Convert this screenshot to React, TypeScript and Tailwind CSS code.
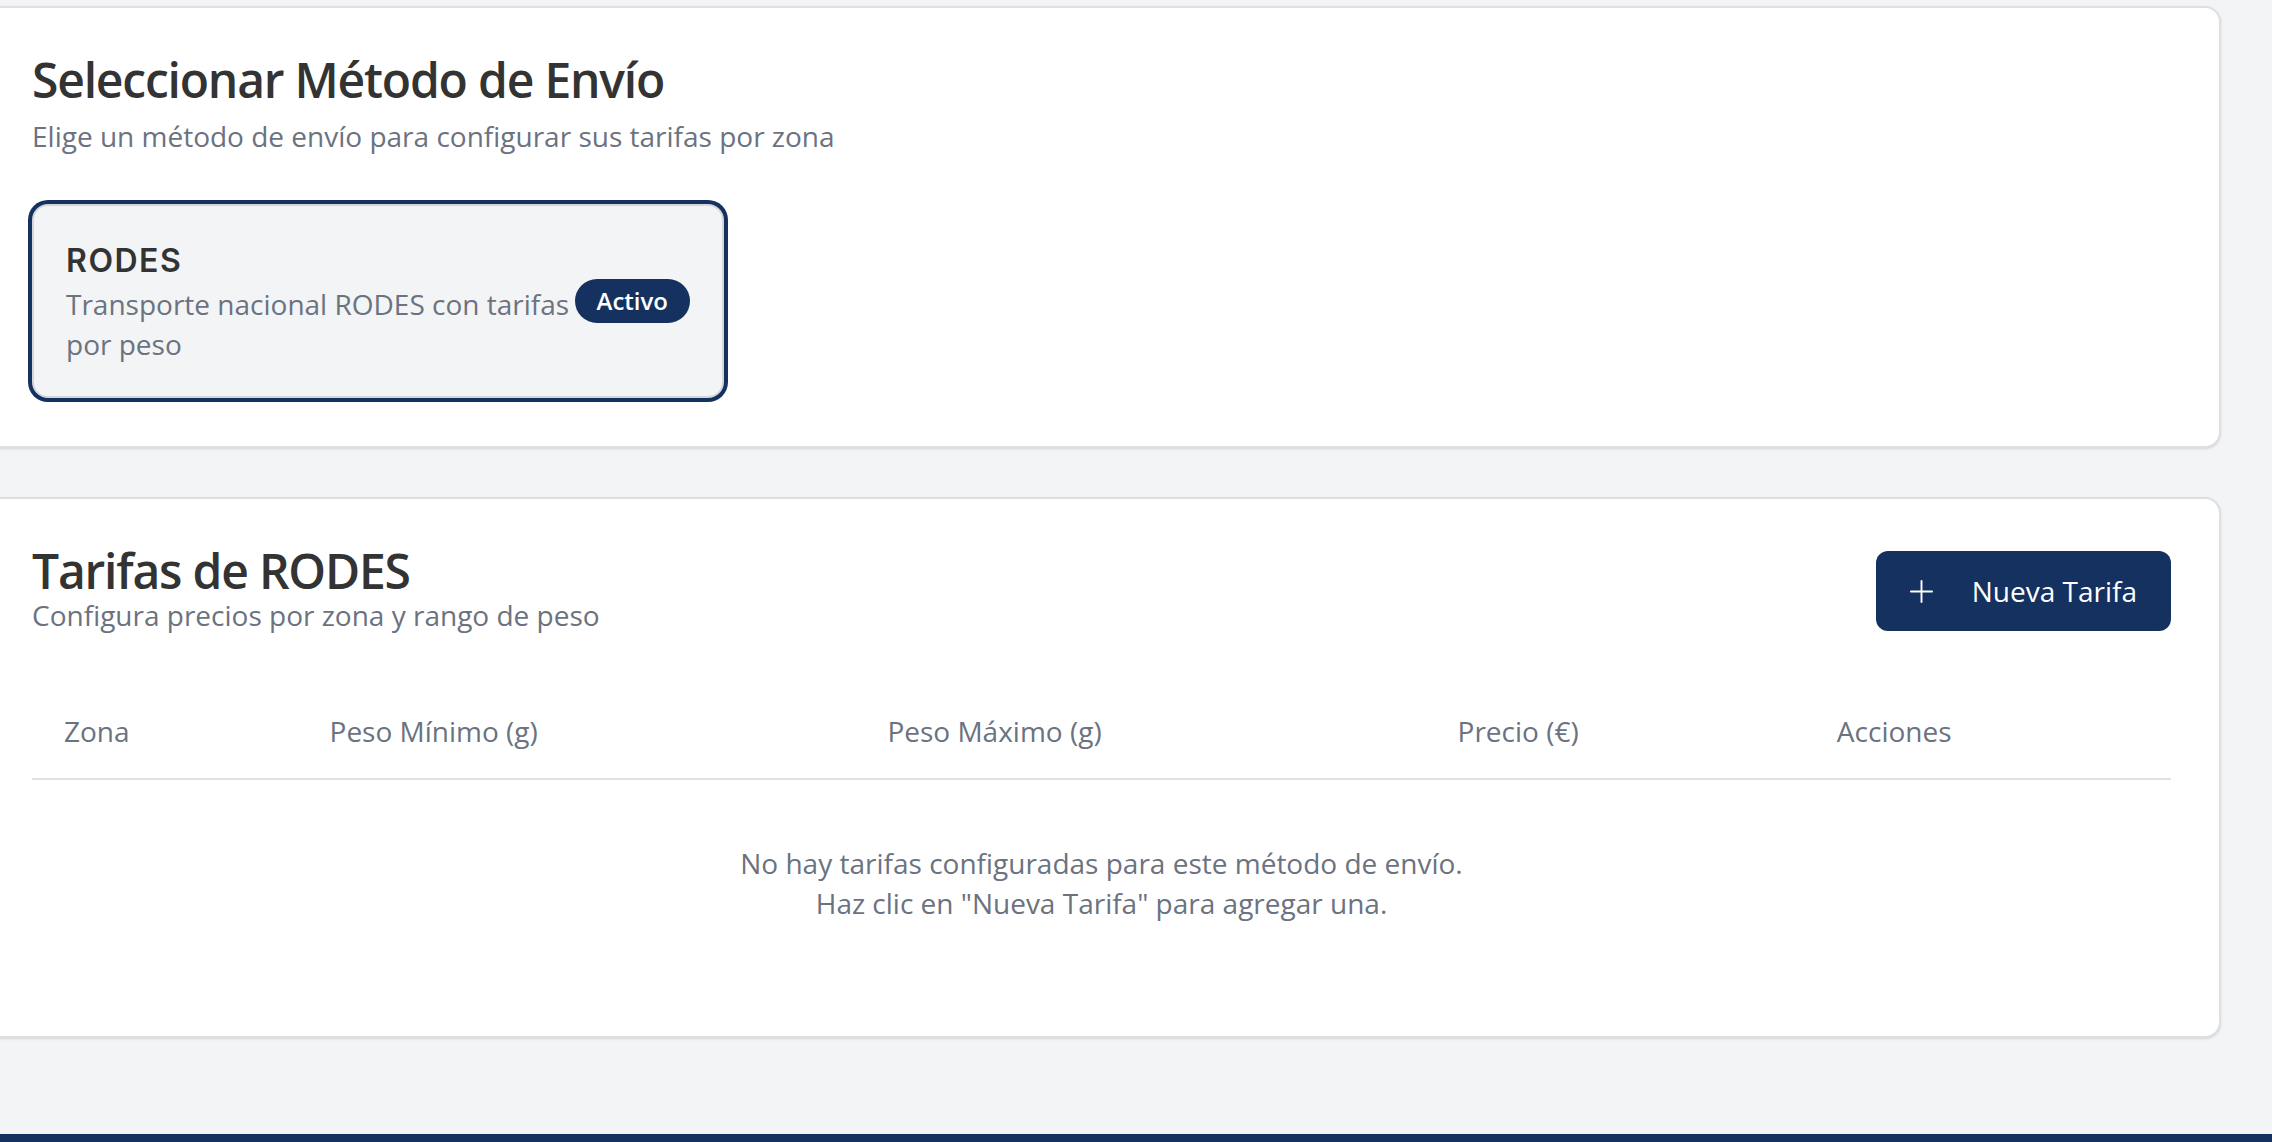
import React from 'react';

const columns = ['Zona', 'Peso Mínimo (g)', 'Peso Máximo (g)', 'Precio (€)', 'Acciones'];

function PlusIcon() {
  return (
    <svg width="23" height="23" viewBox="0 0 24 24" fill="none" stroke="currentColor" strokeWidth="2" strokeLinecap="round">
      <path d="M12 1v22" />
      <path d="M1 12h22" />
    </svg>
  );
}

export default function App() {
  return (
    <div className="min-h-screen bg-[#f3f4f6] font-['Open_Sans',sans-serif]">
      <div className="pt-[6px] -ml-[18px] w-[2239px] flex flex-col gap-[49px]">
        {/* Select shipping method */}
        <div className="rounded-[16px] border-2 border-[#dedfe2] bg-white shadow-sm">
          <div className="p-[48px] flex flex-col gap-[12px]">
            <h2 className="text-[48px] leading-[48px] font-semibold tracking-tight text-[#333333]">
              Seleccionar Método de Envío
            </h2>
            <p className="text-[28px] leading-[40px] text-[#6b7280]">
              Elige un método de envío para configurar sus tarifas por zona
            </p>
          </div>
          <div className="px-[48px] pb-[48px]">
            <div className="w-[692px] rounded-[16px] border-2 border-[#d4d6da] bg-[#f3f4f6] ring-4 ring-[#14315f] p-[32px] flex items-center gap-[2px]">
              <div className="flex-1 min-w-0">
                <h3 className="font-['Inter',sans-serif] text-[32px] leading-[46px] font-semibold tracking-[1.5px] text-[#333333]">
                  RODES
                </h3>
                <p className="text-[28px] leading-[40px] text-[#6b7280]">
                  Transporte nacional RODES con tarifas por peso
                </p>
              </div>
              <span className="rounded-full border-2 border-transparent bg-[#14315f] px-[20px] py-[4px] text-[24px] leading-[32px] font-semibold text-white">
                Activo
              </span>
            </div>
          </div>
        </div>

        {/* Rates */}
        <div className="rounded-[16px] border-2 border-[#dedfe2] bg-white shadow-sm">
          <div className="p-[48px] flex items-center justify-between">
            <div>
              <h2 className="text-[48px] leading-[48px] font-semibold tracking-tight text-[#333333]">
                Tarifas de RODES
              </h2>
              <p className="text-[28px] leading-[40px] text-[#6b7280]">
                Configura precios por zona y rango de peso
              </p>
            </div>
            <button className="h-[80px] rounded-[12px] bg-[#14315f] pl-[34px] pr-[34px] flex items-center gap-[39px] text-white">
              <PlusIcon />
              <span className="text-[28px] leading-[40px] font-medium">Nueva Tarifa</span>
            </button>
          </div>
          <div className="px-[48px] pb-[48px]">
            <table className="w-full border-collapse">
              <thead>
                <tr className="border-b-2 border-[#e2e2e2]">
                  {columns.map((col) => (
                    <th
                      key={col}
                      className="h-[96px] px-[32px] text-left align-middle text-[28px] leading-[40px] font-normal text-[#6b7280]"
                    >
                      {col}
                    </th>
                  ))}
                </tr>
              </thead>
              <tbody>
                <tr>
                  <td colSpan={5} className="pt-[63px] pb-[65px] text-center text-[28px] leading-[40px] text-[#6b7280]">
                    <div>No hay tarifas configuradas para este método de envío.</div>
                    <div>Haz clic en "Nueva Tarifa" para agregar una.</div>
                  </td>
                </tr>
              </tbody>
            </table>
          </div>
        </div>
      </div>
      <footer className="mt-[96px] h-[120px] bg-[#14315f]" />
    </div>
  );
}
